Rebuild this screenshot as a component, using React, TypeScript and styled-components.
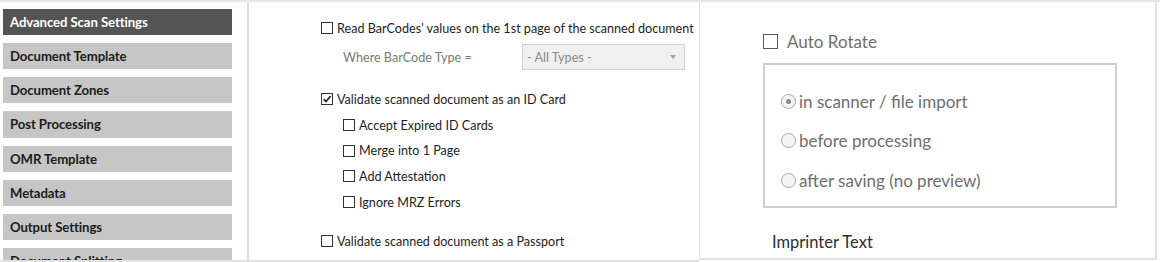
import React from "react";
import styled, { createGlobalStyle } from "styled-components";

const GlobalStyle = createGlobalStyle`
	html, body {
		margin: 0;
		padding: 0;
		background: #ffffff;
	}
	body {
		font-family: "Lato", "Liberation Sans", sans-serif;
	}
`;

const Frame = styled.div`
	display: flex;
	width: 1160px;
	height: 262px;
	overflow: hidden;
	border-top: 2px solid #e6e6e6;
	box-sizing: border-box;
`;

const LeftShot = styled.div`
	display: flex;
	width: 699px;
	height: 258px;
	border-bottom: 2px solid #e2e2e2;
	flex-shrink: 0;
`;

const Nav = styled.nav`
	width: 247px;
	padding: 7px 0 0 3px;
	box-sizing: border-box;
	display: flex;
	flex-direction: column;
	gap: 8px;
	overflow: hidden;
	flex-shrink: 0;
`;

const NavItem = styled.div<{ $active?: boolean }>`
	width: 229px;
	height: 26.14px;
	flex-shrink: 0;
	display: flex;
	align-items: center;
	padding-left: 7px;
	box-sizing: border-box;
	background: ${(p) => (p.$active ? "#545454" : "#c6c6c6")};
	color: ${(p) => (p.$active ? "#ffffff" : "#1c1c1c")};
	font-family: "Lato", "Liberation Sans", sans-serif;
	font-weight: 700;
	font-size: 13.2px;
	letter-spacing: -0.1px;
	white-space: nowrap;
`;

const Middle = styled.section`
	flex: 1;
	border-left: 2px solid #dcdcdc;
	padding: 16px 0 0 72px;
	display: flex;
	flex-direction: column;
	overflow: hidden;
`;

const Row = styled.label<{ $indent?: number; $mt?: number }>`
	display: flex;
	align-items: center;
	height: 20px;
	margin-left: ${(p) => p.$indent || 0}px;
	margin-top: ${(p) => p.$mt || 0}px;
	gap: 4px;
	font-size: 12.6px;
	color: #1e1e1e;
	white-space: nowrap;
`;

const Box = styled.span`
	width: 12px;
	height: 12px;
	border: 1px solid #333333;
	box-sizing: border-box;
	background: #ffffff;
	display: inline-flex;
	align-items: center;
	justify-content: center;
	flex-shrink: 0;
`;

const SelectRow = styled.div`
	display: flex;
	align-items: center;
	height: 26px;
	margin-top: 6px;
	margin-left: 22px;
`;

const FieldLabel = styled.span`
	width: 179px;
	font-size: 12.6px;
	color: #7a7a7a;
`;

const Select = styled.div`
	width: 163px;
	height: 26px;
	box-sizing: border-box;
	background: #f0f0f0;
	border: 1px solid #d2d2d2;
	display: flex;
	align-items: center;
	justify-content: space-between;
	padding: 0 8px 0 4px;
	font-size: 12.6px;
	color: #8a8a8a;
`;

const Arrow = styled.span`
	width: 0;
	height: 0;
	border-left: 3px solid transparent;
	border-right: 3px solid transparent;
	border-top: 4px solid #a0a0a0;
`;

const Right = styled.section`
	width: 458px;
	height: 258px;
	box-sizing: border-box;
	border-left: 1px solid #e4e4e4;
	border-right: 2px solid #e2e2e2;
	border-bottom: 2px solid #e2e2e2;
	padding: 27px 0 0 63px;
	display: flex;
	flex-direction: column;
	color: #6e6e6e;
	font-size: 17px;
	flex-shrink: 0;
`;

const BigRow = styled.div`
	display: flex;
	align-items: center;
	gap: 9px;
	height: 24px;
	white-space: nowrap;
`;

const BigBox = styled.span`
	width: 15px;
	height: 15px;
	border: 1.5px solid #5a5a5a;
	box-sizing: border-box;
	background: #ffffff;
	flex-shrink: 0;
`;

const Group = styled.div`
	width: 354px;
	height: 145px;
	margin-top: 10px;
	box-sizing: border-box;
	border: 2px solid #cfcfcf;
	padding: 24px 0 0 16px;
	display: flex;
	flex-direction: column;
	gap: 15.5px;
`;

const Radio = styled.span<{ $checked?: boolean }>`
	width: 15px;
	height: 15px;
	border-radius: 50%;
	border: 1px solid #a8a8a8;
	background: #f4f4f4;
	box-sizing: border-box;
	display: inline-flex;
	align-items: center;
	justify-content: center;
	flex-shrink: 0;
	&::after {
		content: "";
		display: ${(p) => (p.$checked ? "block" : "none")};
		width: 5px;
		height: 5px;
		border-radius: 50%;
		background: #8a8a8a;
	}
`;

const RadioRow = styled(BigRow)`
	gap: 3px;
`;

const Heading = styled.div`
	margin-top: 24px;
	margin-left: 9px;
	color: #2e2e2e;
	font-size: 16.5px;
`;

const Check = ({ checked }: { checked?: boolean }) => (
	<Box>
		{checked ? (
			<svg width="10" height="10" viewBox="0 0 10 10">
				<path d="M1.6 5.2 L4 7.6 L8.6 2" fill="none" stroke="#222" strokeWidth="1.7" />
			</svg>
		) : null}
	</Box>
);

const navItems = [
	"Advanced Scan Settings",
	"Document Template",
	"Document Zones",
	"Post Processing",
	"OMR Template",
	"Metadata",
	"Output Settings",
	"Document Splitting"
];

const idOptions = ["Accept Expired ID Cards", "Merge into 1 Page", "Add Attestation", "Ignore MRZ Errors"];

const rotateOptions = ["in scanner / file import", "before processing", "after saving (no preview)"];

const App = () => {
	return (
		<>
			<GlobalStyle />
			<Frame>
				<LeftShot>
					<Nav>
						{navItems.map((item, i) => (
							<NavItem key={item} $active={i === 0}>
								{item}
							</NavItem>
						))}
					</Nav>
					<Middle>
						<Row>
							<Check />
							Read BarCodes' values on the 1st page of the scanned document
						</Row>
						<SelectRow>
							<FieldLabel>Where BarCode Type =</FieldLabel>
							<Select>
								<span>- All Types -</span>
								<Arrow />
							</Select>
						</SelectRow>
						<Row $mt={19}>
							<Check checked />
							Validate scanned document as an ID Card
						</Row>
						{idOptions.map((opt, i) => (
							<Row key={opt} $indent={22} $mt={i === 0 ? 6 : 5.7}>
								<Check />
								{opt}
							</Row>
						))}
						<Row $mt={19}>
							<Check />
							Validate scanned document as a Passport
						</Row>
					</Middle>
				</LeftShot>
				<Right>
					<BigRow>
						<BigBox />
						Auto Rotate
					</BigRow>
					<Group>
						{rotateOptions.map((opt, i) => (
							<RadioRow key={opt}>
								<Radio $checked={i === 0} />
								{opt}
							</RadioRow>
						))}
					</Group>
					<Heading>Imprinter Text</Heading>
				</Right>
			</Frame>
		</>
	);
};

export default App;
